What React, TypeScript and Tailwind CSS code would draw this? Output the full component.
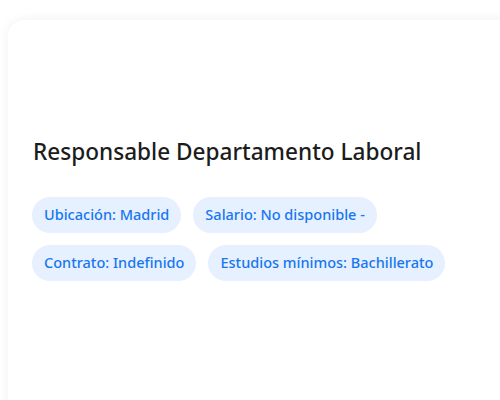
const TAGS = [
  'Ubicación: Madrid',
  'Salario: No disponible -',
  'Contrato: Indefinido',
  'Estudios mínimos: Bachillerato',
];

export default function App() {
  return (
    <div className="h-[400px] bg-white pl-2 pt-5 font-['Noto_Sans',sans-serif] overflow-hidden">
      <div className="w-[520px] h-[420px] rounded-tl-2xl bg-white shadow-[0_0_12px_rgba(0,0,0,0.06)] px-6 pt-[116px]">
        <h1 className="text-[22.6px] leading-[32px] font-medium text-[#1c1c1c] ml-[1px]">
          Responsable Departamento Laboral
        </h1>
        <div className="mt-[29px] flex flex-wrap gap-3 w-[420px]">
          {TAGS.map((tag) => (
            <span
              key={tag}
              className="h-9 flex items-center rounded-full bg-[#e6f0ff] px-3 text-[14.5px] font-medium text-[#1677f0]"
            >
              {tag}
            </span>
          ))}
        </div>
      </div>
    </div>
  );
}
